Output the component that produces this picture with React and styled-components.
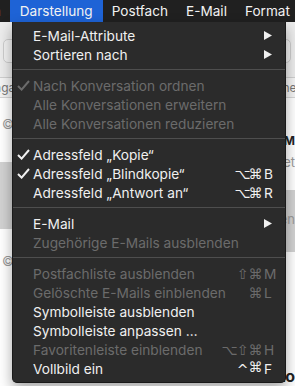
import styled, { createGlobalStyle } from "styled-components";

const GlobalStyle = createGlobalStyle`
  html, body {
    margin: 0;
    padding: 0;
    width: 295px;
    height: 386px;
    overflow: hidden;
    background: #ffffff;
  }
  * { box-sizing: border-box; }
`;

const Screen = styled.div`
  position: relative;
  width: 295px;
  height: 386px;
  overflow: hidden;
  font-family: Inter, "Liberation Sans", "DejaVu Sans", sans-serif;
  display: flex;
  flex-direction: column;
`;

/* ---------- top menu bar ---------- */

const MenuBar = styled.div`
  height: 22px;
  flex-shrink: 0;
  background: #202020;
  display: flex;
  align-items: stretch;
  white-space: nowrap;
`;

const BarItem = styled.div`
  padding: 0 ${(p) => (p.$active ? 10 : 9)}px;
  line-height: 22px;
  font-size: 13.6px;
  color: #f2f2f2;
  background: ${(p) => (p.$active ? "#1e63d6" : "transparent")};
  margin-left: ${(p) => p.$offset || 0}px;
`;

/* ---------- the mail window behind ---------- */

const Window = styled.div`
  flex: 1;
  display: flex;
  flex-direction: column;
  background: #ffffff;
`;

const Toolbar = styled.div`
  height: 56px;
  background: #ececec;
  display: flex;
  align-items: center;
  justify-content: space-between;
  padding: 2px 4px 0 3px;
  border-bottom: 1px solid #cfcfcf;
`;

const Field = styled.div`
  width: ${(p) => p.$w}px;
  height: 24px;
  border: 1px solid #cdcdcd;
  border-radius: 5px;
  background: #f1f1f1;
`;

const HeaderRow = styled.div`
  height: 20px;
  background: #f4f4f4;
  border-bottom: 1px solid #d6d6d6;
  display: flex;
  justify-content: space-between;
  align-items: center;
  font-size: 12px;
  color: #777;
  padding: 0;
`;

const HeaderText = styled.span`
  margin: 0 ${(p) => p.$right || 0}px 0 ${(p) => p.$left || 0}px;
`;

const Panes = styled.div`
  flex: 1;
  display: flex;
`;

const Pane = styled.div`
  display: flex;
  flex-direction: column;
  width: ${(p) => p.$w || "auto"};
  flex: ${(p) => (p.$w ? "none" : 1)};
`;

const Band = styled.div`
  height: ${(p) => p.$h}px;
  width: 100%;
  flex: ${(p) => (p.$h ? "none" : 1)};
  background: ${(p) => (p.$gray ? "#d2d2d2" : "#ffffff")};
  display: flex;
  flex-direction: column;
  justify-content: ${(p) => p.$justify || "center"};
  align-items: ${(p) => (p.$right ? "flex-end" : "flex-start")};
  gap: 6px;
  padding: ${(p) => p.$pad || "0 0 4px 0"};
  font-size: 13px;
  color: #9a9a9a;
`;

const BoldText = styled.span`
  font-weight: 700;
  color: #222;
  font-size: ${(p) => p.$size || 12}px;
`;

/* ---------- dropdown ---------- */

const Dropdown = styled.div`
  position: absolute;
  top: 22px;
  left: 12px;
  width: 274px;
  padding: 4px 0 4px 0;
  background: #2b2b2b;
  border: 1px solid #1a1a1a;
  border-top: none;
  border-radius: 0 0 5px 5px;
  box-shadow: 0 6px 14px rgba(0, 0, 0, 0.35);
`;

const Row = styled.div`
  height: 19px;
  display: flex;
  align-items: center;
  font-size: 13.7px;
  color: ${(p) => (p.$disabled ? "#6b6b6b" : "#f0f0f0")};
  white-space: nowrap;
  padding-right: 9px;
`;

const Gutter = styled.span`
  width: 20px;
  flex-shrink: 0;
  display: flex;
  align-items: center;
  padding-left: 4px;
`;

const Label = styled.span`
  flex: 1;
`;

const Mods = styled.span`
  display: flex;
  margin-right: 2px;
`;

const Mod = styled.span`
  width: 13px;
  display: flex;
  justify-content: center;
  font-family: "DejaVu Sans", sans-serif;
  font-size: 14px;
  line-height: 1;
  padding-top: ${(p) => (p.$caret ? 3 : 0)}px;
`;

const KeyCol = styled.span`
  width: 12px;
  display: flex;
  align-items: center;
`;

const Separator = styled.div`
  height: 1px;
  background: #4e4e4e;
  margin: 5px 0 6px 0;
`;

const Check = ({ color }) => (
  <svg width="13" height="11" viewBox="0 0 13 11">
    <path d="M1 6 L4.6 9.6 L12 1" fill="none" stroke={color} strokeWidth="2" />
  </svg>
);

const Arrow = () => (
  <svg width="8" height="9" viewBox="0 0 8 9">
    <path d="M0 0 L8 4.5 L0 9 Z" fill="#f0f0f0" />
  </svg>
);

const sections = [
  [
    { label: "E-Mail-Attribute", submenu: true },
    { label: "Sortieren nach", submenu: true },
  ],
  [
    { label: "Nach Konversation ordnen", checked: true, disabled: true },
    { label: "Alle Konversationen erweitern", disabled: true },
    { label: "Alle Konversationen reduzieren", disabled: true },
  ],
  [
    { label: "Adressfeld „Kopie“", checked: true },
    { label: "Adressfeld „Blindkopie“", checked: true, mods: ["⌥", "⌘"], key: "B" },
    { label: "Adressfeld „Antwort an“", mods: ["⌥", "⌘"], key: "R" },
  ],
  [
    { label: "E-Mail", submenu: true },
    { label: "Zugehörige E-Mails ausblenden", disabled: true },
  ],
  [
    { label: "Postfachliste ausblenden", disabled: true, mods: ["⇧", "⌘"], key: "M" },
    { label: "Gelöschte E-Mails einblenden", disabled: true, mods: ["⌘"], key: "L" },
    { label: "Symbolleiste ausblenden" },
    { label: "Symbolleiste anpassen …" },
    { label: "Favoritenleiste einblenden", disabled: true, mods: ["⌥", "⇧", "⌘"], key: "H" },
    { label: "Vollbild ein", mods: ["^", "⌘"], key: "F" },
  ],
];

const MenuRow = ({ item }) => (
  <Row $disabled={item.disabled}>
    <Gutter>
      {item.checked && <Check color={item.disabled ? "#6b6b6b" : "#f0f0f0"} />}
    </Gutter>
    <Label>{item.label}</Label>
    {item.mods && (
      <Mods>
        {item.mods.map((m) => (
          <Mod key={m} $caret={m === "^"}>
            {m}
          </Mod>
        ))}
      </Mods>
    )}
    <KeyCol>{item.submenu ? <Arrow /> : item.key}</KeyCol>
  </Row>
);

const App = () => {
  return (
    <Screen>
      <GlobalStyle />
      <MenuBar>
        <BarItem $offset={-78}>Bearbeiten</BarItem>
        <BarItem $active>Darstellung</BarItem>
        <BarItem>Postfach</BarItem>
        <BarItem>E-Mail</BarItem>
        <BarItem>Format</BarItem>
      </MenuBar>

      <Window>
        <Toolbar>
          <Field $w={120} />
          <Field $w={120} />
        </Toolbar>
        <HeaderRow>
          <HeaderText $left={-16}>Eingang</HeaderText>
          <HeaderText $right={-6}>Ordner</HeaderText>
        </HeaderRow>
        <Panes>
          <Pane $w="150px">
            <Band $h={64} $pad="0 0 12px 2px">©</Band>
            <Band $h={67} $gray />
            <Band $justify="flex-start" $pad="24px 0 0 2px">
              <span>©</span>
            </Band>
          </Pane>
          <Pane>
            <Band $h={92} $right $justify="flex-end" $pad="0 0 20px 0">
              <BoldText>EM</BoldText>
              <span>Absender geöffnet</span>
            </Band>
            <Band $h={62} $gray $right>
              <span>E-Mail ansehen</span>
            </Band>
            <Band $right $justify="flex-end" $pad="0 0 0 0">
              <BoldText $size={16}>auto</BoldText>
            </Band>
          </Pane>
        </Panes>
      </Window>

      <Dropdown>
        {sections.map((section, i) => (
          <div key={i}>
            {i > 0 && <Separator />}
            {section.map((item) => (
              <MenuRow key={item.label} item={item} />
            ))}
          </div>
        ))}
      </Dropdown>
    </Screen>
  );
};

export default App;
